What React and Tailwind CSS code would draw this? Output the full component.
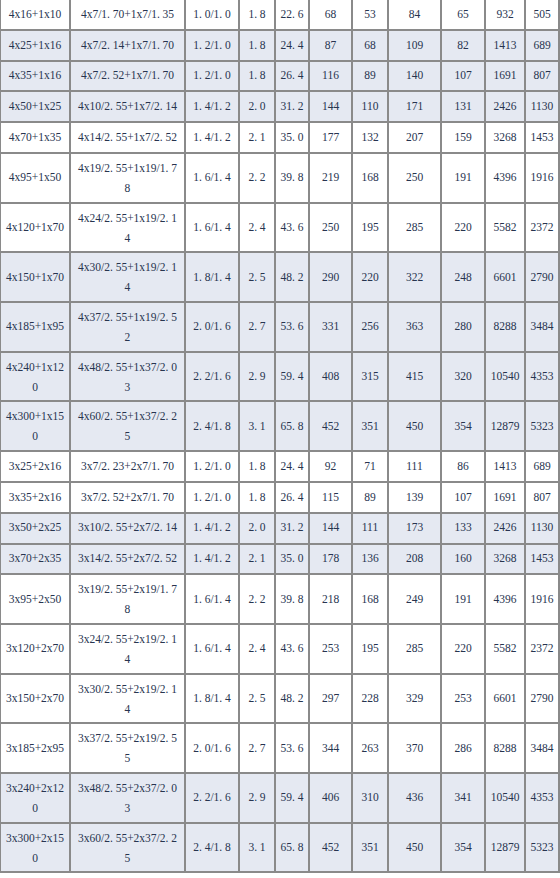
import React from "react";

const W = "white";
const B = "blue";

const rows = [
  [W, ["4x16+1x10", "4x7/1.70+1x7/1.35", "1.0/1.0", "1.8", "22.6", "68", "53", "84", "65", "932", "505"]],
  [B, ["4x25+1x16", "4x7/2.14+1x7/1.70", "1.2/1.0", "1.8", "24.4", "87", "68", "109", "82", "1413", "689"]],
  [B, ["4x35+1x16", "4x7/2.52+1x7/1.70", "1.2/1.0", "1.8", "26.4", "116", "89", "140", "107", "1691", "807"]],
  [B, ["4x50+1x25", "4x10/2.55+1x7/2.14", "1.4/1.2", "2.0", "31.2", "144", "110", "171", "131", "2426", "1130"]],
  [W, ["4x70+1x35", "4x14/2.55+1x7/2.52", "1.4/1.2", "2.1", "35.0", "177", "132", "207", "159", "3268", "1453"]],
  [W, ["4x95+1x50", ["4x19/2.55+1x19/1.7", "8"], "1.6/1.4", "2.2", "39.8", "219", "168", "250", "191", "4396", "1916"]],
  [W, ["4x120+1x70", ["4x24/2.55+1x19/2.1", "4"], "1.6/1.4", "2.4", "43.6", "250", "195", "285", "220", "5582", "2372"]],
  [B, ["4x150+1x70", ["4x30/2.55+1x19/2.1", "4"], "1.8/1.4", "2.5", "48.2", "290", "220", "322", "248", "6601", "2790"]],
  [B, ["4x185+1x95", ["4x37/2.55+1x19/2.5", "2"], "2.0/1.6", "2.7", "53.6", "331", "256", "363", "280", "8288", "3484"]],
  [B, [["4x240+1x12", "0"], ["4x48/2.55+1x37/2.0", "3"], "2.2/1.6", "2.9", "59.4", "408", "315", "415", "320", "10540", "4353"]],
  [B, [["4x300+1x15", "0"], ["4x60/2.55+1x37/2.2", "5"], "2.4/1.8", "3.1", "65.8", "452", "351", "450", "354", "12879", "5323"]],
  [W, ["3x25+2x16", "3x7/2.23+2x7/1.70", "1.2/1.0", "1.8", "24.4", "92", "71", "111", "86", "1413", "689"]],
  [W, ["3x35+2x16", "3x7/2.52+2x7/1.70", "1.2/1.0", "1.8", "26.4", "115", "89", "139", "107", "1691", "807"]],
  [B, ["3x50+2x25", "3x10/2.55+2x7/2.14", "1.4/1.2", "2.0", "31.2", "144", "111", "173", "133", "2426", "1130"]],
  [B, ["3x70+2x35", "3x14/2.55+2x7/2.52", "1.4/1.2", "2.1", "35.0", "178", "136", "208", "160", "3268", "1453"]],
  [W, ["3x95+2x50", ["3x19/2.55+2x19/1.7", "8"], "1.6/1.4", "2.2", "39.8", "218", "168", "249", "191", "4396", "1916"]],
  [W, ["3x120+2x70", ["3x24/2.55+2x19/2.1", "4"], "1.6/1.4", "2.4", "43.6", "253", "195", "285", "220", "5582", "2372"]],
  [W, ["3x150+2x70", ["3x30/2.55+2x19/2.1", "4"], "1.8/1.4", "2.5", "48.2", "297", "228", "329", "253", "6601", "2790"]],
  [W, ["3x185+2x95", ["3x37/2.55+2x19/2.5", "5"], "2.0/1.6", "2.7", "53.6", "344", "263", "370", "286", "8288", "3484"]],
  [B, [["3x240+2x12", "0"], ["3x48/2.55+2x37/2.0", "3"], "2.2/1.6", "2.9", "59.4", "406", "310", "436", "341", "10540", "4353"]],
  [B, [["3x300+2x15", "0"], ["3x60/2.55+2x37/2.2", "5"], "2.4/1.8", "3.1", "65.8", "452", "351", "450", "354", "12879", "5323"]],
];

function Txt({ s }) {
  const parts = s.split(".");
  return (
    <span>
      {parts.map((p, i) => (
        <React.Fragment key={i}>
          {p}
          {i < parts.length - 1 && <span className="mr-[2.8px]">.</span>}
        </React.Fragment>
      ))}
    </span>
  );
}

function Cell({ value, bg, tall }) {
  const content = Array.isArray(value) ? (
    <div className="flex flex-col items-center leading-[20px]">
      {value.map((v, i) => (
        <Txt key={i} s={v} />
      ))}
    </div>
  ) : (
    <Txt s={value} />
  );
  return (
    <div
      className={
        "flex items-center justify-center text-center whitespace-nowrap " +
        (tall ? "h-[47.7px] " : "h-[28.8px] ") +
        (bg === B ? "bg-[#e5e9f2]" : "bg-white")
      }
    >
      {content}
    </div>
  );
}

export default function App() {
  return (
    <div className="w-[560px] bg-white">
      <div
        className="w-[560px] bg-[#8a8a8a] pl-[1px] pr-[2px] pb-[2px] text-[11.5px] text-[#27344f]"
        style={{ fontFamily: '"Liberation Serif", "Noto Sans CJK SC", serif' }}
      >
        <div className="grid grid-cols-[68px_113px_52px_34px_32px_41px_34px_51px_42px_38px_32px] gap-[2px]">
          {rows.map(([bg, cells], r) => {
            const tall = cells.some((c) => Array.isArray(c));
            return cells.map((c, i) => (
              <Cell key={r + "-" + i} value={c} bg={bg} tall={tall} />
            ));
          })}
        </div>
      </div>
    </div>
  );
}
